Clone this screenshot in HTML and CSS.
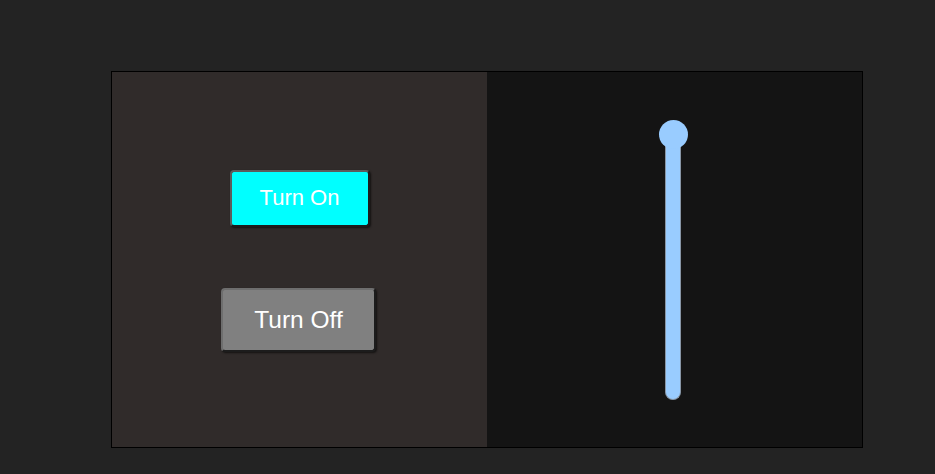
FILE: index.html
```html
<!DOCTYPE html>
<html>
<head>
<meta charset="utf-8">
<link rel="stylesheet" href="styles.css">
</head>
<body>
<div class="frame">
  <div class="panel panel-left">
    <button class="btn btn-on">Turn On</button>
    <button class="btn btn-off">Turn Off</button>
  </div>
  <div class="panel panel-right">
    <div class="slider">
      <div class="thumb"></div>
      <div class="track"></div>
    </div>
  </div>
</div>
</body>
</html>
```
FILE: styles.css
```css
html, body {
  margin: 0;
  padding: 0;
}
body {
  background: #232323;
  width: 935px;
  height: 474px;
  overflow: hidden;
  font-family: "Liberation Sans", Arial, sans-serif;
}
.frame {
  margin: 71px 0 0 111px;
  width: 750px;
  height: 375px;
  border: 1px solid #000;
  display: flex;
}
.panel {
  flex: 1;
  display: flex;
  flex-direction: column;
  align-items: center;
  justify-content: center;
}
.panel-left {
  background: #302b2a;
  gap: 61px;
  padding-top: 2px;
  box-sizing: border-box;
}
.panel-right {
  background: #141414;
}
.btn {
  font-family: "Liberation Sans", Arial, sans-serif;
  color: #fff;
  border: 2px solid;
  border-radius: 4px;
  box-sizing: border-box;
  padding: 0;
  cursor: pointer;
  box-shadow: 1px 1px 2px rgba(0, 0, 0, 0.6);
}
.btn-on {
  width: 140px;
  height: 57px;
  font-size: 22px;
  background: #00ffff;
  border-color: #5c5c5c #1c1c1c #1c1c1c #5c5c5c;
}
.btn-off {
  width: 155px;
  height: 64px;
  font-size: 24.5px;
  background: #808080;
  border-color: #6e6e6e #1c1c1c #1c1c1c #6e6e6e;
  margin-left: -2px;
}
.slider {
  position: relative;
  width: 29px;
  height: 279px;
  display: flex;
  justify-content: center;
  margin-left: -3px;
}
.track {
  margin-top: 14px;
  width: 16px;
  height: 266px;
  background: #99ccff;
  border: 1px solid #8896a6;
  border-top: none;
  border-radius: 0 0 8px 8px;
  box-sizing: border-box;
}
.thumb {
  position: absolute;
  top: 0;
  left: 0;
  width: 29px;
  height: 29px;
  border-radius: 50%;
  background: #99ccff;
  z-index: 1;
}
```
